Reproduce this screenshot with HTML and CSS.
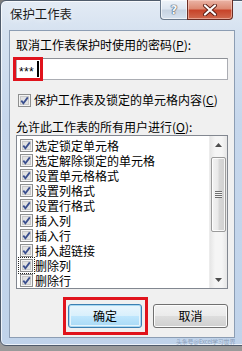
FILE: index.html
```html
<!DOCTYPE html>
<html>
<head>
<meta charset="utf-8">
<link rel="stylesheet" href="styles.css">
</head>
<body>
<div class="window">
  <div class="titlebar">
    <div class="title">保护工作表</div>
    <div class="caption-btns">
      <div class="btn-help"><span>?</span></div>
      <div class="btn-close">
        <svg width="16" height="12" viewBox="0 0 16 12"><path d="M3 1.5 L13 10.5 M13 1.5 L3 10.5" stroke="#5a1d14" stroke-width="4" stroke-linecap="round"/><path d="M3 1.5 L13 10.5 M13 1.5 L3 10.5" stroke="#fff" stroke-width="2.2" stroke-linecap="round"/></svg>
      </div>
    </div>
  </div>
  <div class="client">
    <div class="label first">取消工作表保护时使用的密码(<u>P</u>):</div>
    <div class="input"><span class="stars">***</span><span class="caret"></span></div>
    <div class="check-row main">
      <span class="cb"><svg width="13" height="13" viewBox="0 0 13 13"><rect x="0.5" y="0.5" width="12" height="12" fill="#f4f4f4" stroke="#8e8f8f"/><rect x="2.5" y="2.5" width="8" height="8" fill="#e2e2e2" stroke="#c8c8c8"/><path d="M3.3 6.6 L5.4 9.2 L9.8 3.4" fill="none" stroke="#3a4f8e" stroke-width="1.8"/></svg></span>
      <span>保护工作表及锁定的单元格内容(<u>C</u>)</span>
    </div>
    <div class="label second">允许此工作表的所有用户进行(<u>O</u>):</div>
    <div class="list">
      <div class="items">
        <div class="item"><span class="cb"><svg width="13" height="13" viewBox="0 0 13 13"><rect x="0.5" y="0.5" width="12" height="12" fill="#f4f4f4" stroke="#8e8f8f"/><rect x="2.5" y="2.5" width="8" height="8" fill="#e2e2e2" stroke="#c8c8c8"/><path d="M3.3 6.6 L5.4 9.2 L9.8 3.4" fill="none" stroke="#3a4f8e" stroke-width="1.8"/></svg></span><span class="txt">选定锁定单元格</span></div>
        <div class="item"><span class="cb"><svg width="13" height="13" viewBox="0 0 13 13"><rect x="0.5" y="0.5" width="12" height="12" fill="#f4f4f4" stroke="#8e8f8f"/><rect x="2.5" y="2.5" width="8" height="8" fill="#e2e2e2" stroke="#c8c8c8"/><path d="M3.3 6.6 L5.4 9.2 L9.8 3.4" fill="none" stroke="#3a4f8e" stroke-width="1.8"/></svg></span><span class="txt">选定解除锁定的单元格</span></div>
        <div class="item"><span class="cb"><svg width="13" height="13" viewBox="0 0 13 13"><rect x="0.5" y="0.5" width="12" height="12" fill="#f4f4f4" stroke="#8e8f8f"/><rect x="2.5" y="2.5" width="8" height="8" fill="#e2e2e2" stroke="#c8c8c8"/><path d="M3.3 6.6 L5.4 9.2 L9.8 3.4" fill="none" stroke="#3a4f8e" stroke-width="1.8"/></svg></span><span class="txt">设置单元格格式</span></div>
        <div class="item"><span class="cb"><svg width="13" height="13" viewBox="0 0 13 13"><rect x="0.5" y="0.5" width="12" height="12" fill="#f4f4f4" stroke="#8e8f8f"/><rect x="2.5" y="2.5" width="8" height="8" fill="#e2e2e2" stroke="#c8c8c8"/><path d="M3.3 6.6 L5.4 9.2 L9.8 3.4" fill="none" stroke="#3a4f8e" stroke-width="1.8"/></svg></span><span class="txt">设置列格式</span></div>
        <div class="item"><span class="cb"><svg width="13" height="13" viewBox="0 0 13 13"><rect x="0.5" y="0.5" width="12" height="12" fill="#f4f4f4" stroke="#8e8f8f"/><rect x="2.5" y="2.5" width="8" height="8" fill="#e2e2e2" stroke="#c8c8c8"/><path d="M3.3 6.6 L5.4 9.2 L9.8 3.4" fill="none" stroke="#3a4f8e" stroke-width="1.8"/></svg></span><span class="txt">设置行格式</span></div>
        <div class="item"><span class="cb"><svg width="13" height="13" viewBox="0 0 13 13"><rect x="0.5" y="0.5" width="12" height="12" fill="#f4f4f4" stroke="#8e8f8f"/><rect x="2.5" y="2.5" width="8" height="8" fill="#e2e2e2" stroke="#c8c8c8"/><path d="M3.3 6.6 L5.4 9.2 L9.8 3.4" fill="none" stroke="#3a4f8e" stroke-width="1.8"/></svg></span><span class="txt">插入列</span></div>
        <div class="item"><span class="cb"><svg width="13" height="13" viewBox="0 0 13 13"><rect x="0.5" y="0.5" width="12" height="12" fill="#f4f4f4" stroke="#8e8f8f"/><rect x="2.5" y="2.5" width="8" height="8" fill="#e2e2e2" stroke="#c8c8c8"/><path d="M3.3 6.6 L5.4 9.2 L9.8 3.4" fill="none" stroke="#3a4f8e" stroke-width="1.8"/></svg></span><span class="txt">插入行</span></div>
        <div class="item"><span class="cb"><svg width="13" height="13" viewBox="0 0 13 13"><rect x="0.5" y="0.5" width="12" height="12" fill="#f4f4f4" stroke="#8e8f8f"/><rect x="2.5" y="2.5" width="8" height="8" fill="#e2e2e2" stroke="#c8c8c8"/><path d="M3.3 6.6 L5.4 9.2 L9.8 3.4" fill="none" stroke="#3a4f8e" stroke-width="1.8"/></svg></span><span class="txt">插入超链接</span></div>
        <div class="item"><span class="cb focus"><svg width="13" height="13" viewBox="0 0 13 13"><rect x="0.5" y="0.5" width="12" height="12" fill="#f4f4f4" stroke="#8e8f8f"/><rect x="2.5" y="2.5" width="8" height="8" fill="#e2e2e2" stroke="#c8c8c8"/><path d="M3.3 6.6 L5.4 9.2 L9.8 3.4" fill="none" stroke="#3a4f8e" stroke-width="1.8"/></svg></span><span class="txt">删除列</span></div>
        <div class="item"><span class="cb"><svg width="13" height="13" viewBox="0 0 13 13"><rect x="0.5" y="0.5" width="12" height="12" fill="#f4f4f4" stroke="#8e8f8f"/><rect x="2.5" y="2.5" width="8" height="8" fill="#e2e2e2" stroke="#c8c8c8"/><path d="M3.3 6.6 L5.4 9.2 L9.8 3.4" fill="none" stroke="#3a4f8e" stroke-width="1.8"/></svg></span><span class="txt">删除行</span></div>
      </div>
      <div class="scrollbar">
        <div class="arrow up"><svg width="7" height="4" viewBox="0 0 7 4"><path d="M0 4 L3.5 0 L7 4 Z" fill="#4d4d4d"/></svg></div>
        <div class="track">
          <div class="thumb"><span class="grip"></span></div>
        </div>
        <div class="arrow down"><svg width="7" height="4" viewBox="0 0 7 4"><path d="M0 0 L3.5 4 L7 0 Z" fill="#4d4d4d"/></svg></div>
      </div>
    </div>
    <div class="buttons">
      <div class="btn default">确定</div>
      <div class="btn">取消</div>
    </div>
  </div>
  <div class="watermark">头条号@Excel学习世界</div>
  <div class="mark mark-pw"></div>
  <div class="mark mark-ok"></div>
</div>
</body>
</html>
```
FILE: styles.css
```css
html, body {
  margin: 0;
  padding: 0;
}
body {
  width: 242px;
  height: 351px;
  overflow: hidden;
  background: linear-gradient(#7d7d7d, #9a9a9a);
  font-family: "Noto Sans CJK SC", "Liberation Sans", sans-serif;
  font-size: 12px;
  color: #000;
}
.window {
  position: relative;
  box-sizing: border-box;
  width: 250px;
  height: 346px;
  border: 1px solid #4f5b6b;
  border-radius: 6px 6px 0 6px;
  background: linear-gradient(180deg, #e3ebf5 0px, #d6e2f0 30px, #c6d7ec 120px, #c0d3ea 100%);
  box-shadow: inset 0 0 0 1px rgba(255,255,255,0.7);
  display: flex;
  flex-direction: column;
}
.titlebar {
  height: 29px;
  display: flex;
  align-items: flex-start;
}
.title {
  padding: 5px 0 0 9px;
  line-height: 16px;
  font-size: 12.4px;
  color: #1a1a1a;
  text-shadow: 0 0 6px rgba(255,255,255,0.9);
}
.caption-btns {
  margin-left: auto;
  margin-right: 16px;
  display: flex;
  margin-top: -1px;
}
.btn-help {
  box-sizing: border-box;
  width: 27px;
  height: 20px;
  border: 1px solid #6b7a8d;
  border-top: none;
  border-right: none;
  border-radius: 0 0 0 4px;
  background: linear-gradient(180deg, #eef3f9 0%, #dde6f1 45%, #c7d3e2 55%, #d7e2ef 100%);
  box-shadow: inset 0 0 0 1px rgba(255,255,255,0.6);
  display: flex;
  align-items: center;
  justify-content: center;
}
.btn-help span {
  font-family: "DejaVu Sans", sans-serif;
  font-size: 12px;
  font-weight: bold;
  color: #f4f6f9;
  text-shadow: 0 0 1px #3e4b5c, 0 0 1px #3e4b5c, 0 0 1px #3e4b5c;
  line-height: 14px;
}
.btn-close {
  box-sizing: border-box;
  width: 46px;
  height: 20px;
  border: 1px solid #6b2d24;
  border-top: none;
  border-radius: 0 0 4px 0;
  background: linear-gradient(180deg, #eab4a6 0%, #dd8b74 45%, #c8442a 55%, #d06a4f 100%);
  box-shadow: inset 0 0 0 1px rgba(255,220,210,0.5);
  display: flex;
  align-items: center;
  justify-content: center;
}
.client {
  box-sizing: border-box;
  margin-left: 8px;
  width: 226px;
  height: 308px;
  border: 1px solid #8c9db3;
  background: #f0f0f0;
  padding: 0 6px;
  display: flex;
  flex-direction: column;
}
.label {
  line-height: 16px;
  white-space: nowrap;
}
.label u, .check-row u {
  text-decoration-thickness: 1px;
  text-underline-offset: 1px;
}
.label.first {
  margin-top: 6px;
}
.input {
  box-sizing: border-box;
  margin-top: 5px;
  height: 22px;
  width: 212px;
  background: #fff;
  border: 1px solid #abadb3;
  border-top-color: #8d9096;
  display: flex;
  align-items: center;
  padding-left: 2px;
}
.stars {
  font-family: "Liberation Sans", sans-serif;
  font-size: 12px;
  line-height: 12px;
  padding-top: 5px;
  letter-spacing: 0.3px;
}
.caret {
  width: 2px;
  height: 16px;
  background: #000;
  margin-left: 3px;
}
.check-row {
  display: flex;
  align-items: center;
  line-height: 16px;
  white-space: nowrap;
}
.check-row.main {
  margin-top: 12px;
  padding-left: 2px;
}
.cb {
  width: 13px;
  height: 13px;
  display: inline-flex;
  flex: none;
}
.check-row .cb {
  margin-right: 3px;
}
.label.second {
  margin-top: 11px;
}
.list {
  box-sizing: border-box;
  height: 154px;
  width: 212px;
  background: #fff;
  border: 1px solid #828790;
  display: flex;
  overflow: hidden;
}
.items {
  flex: 1;
  padding: 2px 0 0 3px;
}
.item {
  height: 15px;
  display: flex;
  align-items: center;
  white-space: nowrap;
}
.item .txt {
  line-height: 13px;
  height: 13px;
  display: block;
}
.item .cb {
  margin-right: 2px;
}
.cb.focus {
  outline: 1px dotted #222;
  outline-offset: 1px;
}
.scrollbar {
  width: 17px;
  display: flex;
  flex-direction: column;
  background: linear-gradient(90deg, #e6e6e6, #f5f5f5 30%, #f5f5f5 70%, #e6e6e6);
  border-left: 1px solid #ececec;
}
.arrow {
  height: 17px;
  display: flex;
  align-items: center;
  justify-content: center;
}
.track {
  flex: 1;
  padding: 4px 1px 39px 1px;
  display: flex;
}
.thumb {
  box-sizing: border-box;
  flex: 1;
  border: 1px solid #9b9b9b;
  border-radius: 2px;
  background: linear-gradient(90deg, #f3f3f3 0%, #e9e9e9 45%, #d7d7d7 55%, #cfcfcf 100%);
  box-shadow: inset 0 0 0 1px rgba(255,255,255,0.8);
  display: flex;
  align-items: center;
  justify-content: center;
}
.grip {
  width: 7px;
  height: 7px;
  background: repeating-linear-gradient(180deg, #6e6e6e 0 1px, #f4f4f4 1px 2px);
}
.buttons {
  margin-top: 15px;
  display: flex;
  justify-content: flex-end;
  gap: 11px;
}
.btn {
  box-sizing: border-box;
  width: 75px;
  height: 24px;
  border: 1px solid #707070;
  border-radius: 3px;
  background: linear-gradient(180deg, #f2f2f2 0%, #ebebeb 48%, #dddddd 52%, #cfcfcf 100%);
  box-shadow: inset 0 0 0 1px #fcfcfc;
  display: flex;
  align-items: center;
  justify-content: center;
  line-height: 16px;
}
.btn.default {
  width: 74px;
  border-color: #3c7fb1;
  box-shadow: inset 0 0 0 1px #a7d8f3, inset 0 0 0 2px #e6f4fb;
  background: linear-gradient(180deg, #eaf6fd 0%, #d9f0fc 48%, #bee6fd 52%, #a7d9f5 100%);
}
.watermark {
  position: absolute;
  left: 175px;
  top: 337px;
  font-size: 6px;
  line-height: 7px;
  letter-spacing: -0.2px;
  color: rgba(90,110,140,0.55);
  white-space: nowrap;
}
.mark {
  position: absolute;
  border: 3px solid #e0131c;
  box-sizing: border-box;
}
.mark-pw {
  left: 12px;
  top: 56px;
  width: 30px;
  height: 24px;
}
.mark-ok {
  left: 62px;
  top: 296px;
  width: 85px;
  height: 38px;
}
```
